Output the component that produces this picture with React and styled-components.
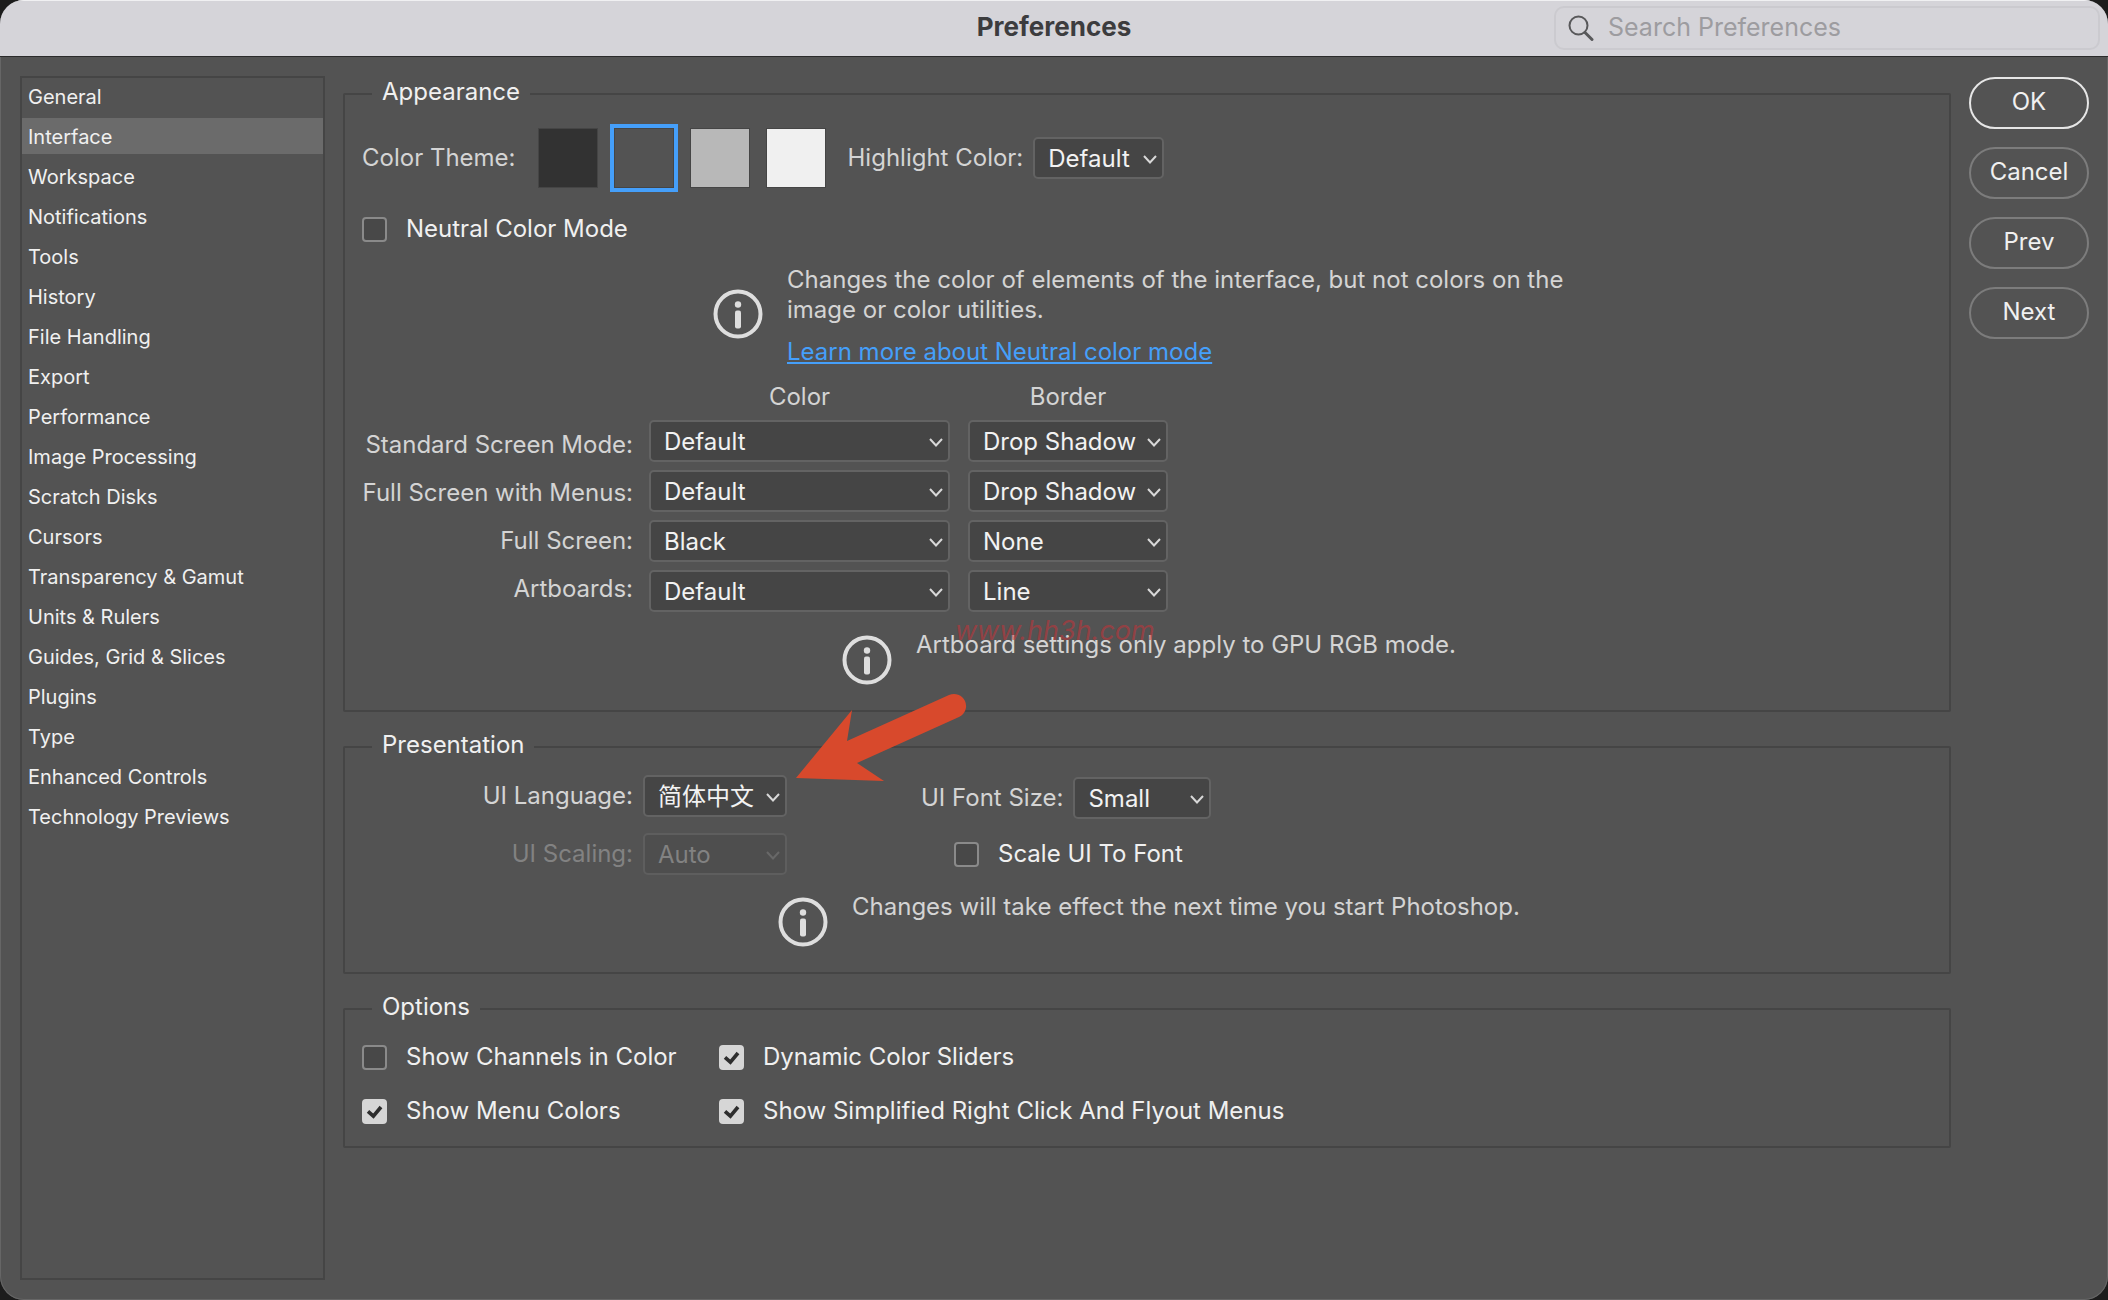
// src/components/Preferences/Preferences.jsx
import { useState } from 'react';
import styled, { createGlobalStyle } from 'styled-components';

const GlobalStyle = createGlobalStyle`
  * {
    box-sizing: border-box;
  }

  body {
    margin: 0;
    background: #1c1c1c;
    color: #d4d4d4;
    font-family: Inter, 'Noto Sans CJK SC', sans-serif;
    font-size: 24px;
    line-height: 30px;
  }

  button, input, select {
    font: inherit;
    color: inherit;
  }
`;

// Styled Components
const Dialog = styled.div`
  display: flex;
  flex-direction: column;
  min-height: 100vh;
  background: #535353;
  border-radius: 24px;
  overflow: hidden;
  box-shadow: inset 0 0 0 1px #666;
`;

const TitleBar = styled.header`
  display: grid;
  grid-template-columns: 1fr auto 1fr;
  align-items: center;
  height: 57px;
  padding: 0 8px 2px;
  background: #d5d4d9;
  border-top: 1px solid #f0f0f2;
  border-bottom: 1px solid #2b2b2b;
`;

const Title = styled.h1`
  grid-column: 2;
  margin: 0;
  padding-bottom: 2px;
  font-size: 26px;
  font-weight: 700;
  color: #3c3c3e;
`;

const SearchBox = styled.label`
  display: flex;
  align-items: center;
  justify-self: end;
  gap: 14px;
  width: 100%;
  max-width: 546px;
  height: 44px;
  padding: 0 12px;
  border: 2px solid #cbcacf;
  border-radius: 10px;
  color: #58585a;
`;

const SearchInput = styled.input`
  flex: 1;
  min-width: 0;
  padding: 0 0 2px;
  border: 0;
  outline: 0;
  background: transparent;
  font-size: 25px;

  &::placeholder {
    color: #9d9ca0;
    opacity: 1;
  }
`;

const Body = styled.div`
  display: flex;
  flex: 1;
  gap: 18px;
  padding: 19px 19px 20px 20px;
`;

const Sidebar = styled.nav`
  flex: 0 0 305px;
  border: 2px solid #454545;
`;

const SidebarList = styled.ul`
  display: flex;
  flex-direction: column;
  gap: 4px;
  margin: 0;
  padding: 0;
  list-style: none;
`;

const SidebarLink = styled.a`
  display: block;
  padding: 2px 6px 0;
  font-size: 20px;
  line-height: 34px;
  color: #f0f0f0;
  text-decoration: none;
  background: ${({ $active }) => ($active ? '#6b6b6b' : 'transparent')};
`;

const Panels = styled.main`
  position: relative;
  display: flex;
  flex: 1;
  flex-direction: column;
  gap: 21px;
  min-width: 0;
  padding-top: 4px;
`;

const Group = styled.fieldset`
  min-width: 0;
  margin: 0;
  padding: 14px 17px 20px;
  border: 2px solid #454545;
  border-radius: 2px;
`;

const GroupTitle = styled.legend`
  margin-left: 10px;
  padding: 0 10px 4px;
  line-height: 24px;
  color: #f0f0f0;
`;

const ThemeRow = styled.div`
  display: flex;
  align-items: center;
  gap: 22px;
  margin-top: 6px;
`;

const Swatches = styled.div`
  display: flex;
  gap: 16px;
`;

const Swatch = styled.input`
  appearance: none;
  width: 60px;
  height: 60px;
  margin: 0;
  border: 1px solid #454545;
  background: ${({ $color }) => $color};

  &:checked {
    outline: 4px solid #459ffa;
  }
`;

const Field = styled.div`
  display: flex;
  align-items: center;
  justify-content: space-between;
  gap: 10px;
`;

const FieldLabel = styled.label`
  flex: 1;
  text-align: right;
  white-space: nowrap;
  color: ${({ $disabled }) => ($disabled ? '#828282' : '#d4d4d4')};
`;

const SelectBox = styled.div`
  display: grid;
  align-items: center;
  width: ${({ $width }) => $width}px;
  color: ${({ $disabled }) => ($disabled ? '#828282' : '#f2f2f2')};

  > * {
    grid-area: 1 / 1;
  }

  svg {
    justify-self: end;
    margin: 3px 7px 0 0;
    pointer-events: none;
    opacity: ${({ $disabled }) => ($disabled ? 0.5 : 0.85)};
  }
`;

const NativeSelect = styled.select`
  appearance: none;
  width: 100%;
  height: 42px;
  padding: 2px 24px 0 13px;
  border: 2px solid #636363;
  border-radius: 5px;
  background: #454545;
  opacity: 1;

  &:disabled {
    border-color: #5e5e5e;
    background: #4e4e4e;
  }
`;

const CheckLabel = styled.label`
  display: flex;
  align-items: center;
  gap: 19px;
  color: #f0f0f0;
`;

const CheckBox = styled.span`
  display: grid;
  width: 25px;
  height: 25px;

  > * {
    grid-area: 1 / 1;
  }

  svg {
    pointer-events: none;
  }
`;

const NativeCheckbox = styled.input`
  appearance: none;
  width: 25px;
  height: 25px;
  margin: 0;
  border: 2px solid #8a8a8a;
  border-radius: 4px;
  background: #484848;

  &:checked {
    border-color: #d6d6d6;
    background: #d6d6d6;
  }

  &:not(:checked) + svg {
    display: none;
  }
`;

const NeutralRow = styled.div`
  display: flex;
  margin-top: 26px;
`;

const Info = styled.div`
  display: flex;
  align-items: ${({ $centered }) => ($centered ? 'center' : 'flex-start')};
  gap: 24px;
  margin: ${({ $top }) => $top}px 0 0 ${({ $indent }) => $indent}px;
  padding-bottom: ${({ $centered }) => ($centered ? 0 : 5)}px;

  svg {
    flex: none;
    margin: ${({ $centered }) => ($centered ? '0 0 4px' : '5px 0 0')};
  }
`;

const InfoText = styled.p`
  max-width: 800px;
  margin: 0;
`;

const InfoLink = styled.a`
  display: inline-block;
  margin-top: 12px;
  color: #459ffa;
  text-underline-offset: 2px;
`;

const ScreenModes = styled.div`
  display: flex;
  align-items: flex-start;
  gap: 16px;
  margin-top: 15px;
`;

const ScreenLabels = styled.div`
  display: flex;
  flex-direction: column;
  width: 271px;
  padding-top: 39px;
  line-height: 48px;
`;

const ScreenGrid = styled.div`
  display: grid;
  grid-template-columns: auto auto;
  gap: 8px 18px;
`;

const ColumnTitle = styled.span`
  text-align: center;
`;

const PresentationRow = styled.div`
  display: flex;
  gap: 134px;
`;

const LanguageFields = styled.div`
  display: flex;
  flex-direction: column;
  gap: 16px;
  width: 425px;
`;

const FontFields = styled.div`
  display: flex;
  flex-direction: column;
  gap: 20px;
  padding-top: 2px;
`;

const ScaleRow = styled.div`
  padding-left: 33px;
`;

const OptionGrid = styled.div`
  display: grid;
  grid-template-columns: 357px 1fr;
  gap: 24px 0;
  margin-top: 5px;
`;

const Actions = styled.div`
  display: flex;
  flex: 0 0 120px;
  flex-direction: column;
  gap: 18px;
  padding-top: 1px;
`;

const ActionButton = styled.button`
  height: 52px;
  padding: 0 0 2px;
  border: 2px solid ${({ $primary }) => ($primary ? '#e6e6e6' : '#7c7c7c')};
  border-radius: 26px;
  background: transparent;
  color: #f0f0f0;
`;

const Watermark = styled.span`
  position: absolute;
  top: 540px;
  left: 612px;
  font-size: 27px;
  font-style: italic;
  color: rgba(200, 50, 55, 0.55);
  pointer-events: none;
`;

const Pointer = styled.svg`
  position: absolute;
  top: 614px;
  left: 453px;
  pointer-events: none;
`;

const sections = [
  'General',
  'Interface',
  'Workspace',
  'Notifications',
  'Tools',
  'History',
  'File Handling',
  'Export',
  'Performance',
  'Image Processing',
  'Scratch Disks',
  'Cursors',
  'Transparency & Gamut',
  'Units & Rulers',
  'Guides, Grid & Slices',
  'Plugins',
  'Type',
  'Enhanced Controls',
  'Technology Previews',
];

const themes = [
  { name: 'Dark', color: '#323232' },
  { name: 'Medium gray', color: '#535353' },
  { name: 'Light gray', color: '#b8b8b8' },
  { name: 'Light', color: '#f0f0f0' },
];

const screenModes = [
  { id: 'standard', label: 'Standard Screen Mode:', color: 'Default', border: 'Drop Shadow' },
  { id: 'menus', label: 'Full Screen with Menus:', color: 'Default', border: 'Drop Shadow' },
  { id: 'full', label: 'Full Screen:', color: 'Black', border: 'None' },
  { id: 'artboards', label: 'Artboards:', color: 'Default', border: 'Line' },
];

const options = [
  { label: 'Show Channels in Color', checked: false },
  { label: 'Dynamic Color Sliders', checked: true },
  { label: 'Show Menu Colors', checked: true },
  { label: 'Show Simplified Right Click And Flyout Menus', checked: true },
];

const SearchIcon = () => (
  <svg width="26" height="26" viewBox="0 0 26 26" fill="none" stroke="currentColor" aria-hidden="true">
    <circle cx="10.5" cy="10.5" r="9" strokeWidth="2" />
    <path d="M17 17.5l7 7" strokeWidth="3" strokeLinecap="round" />
  </svg>
);

const InfoIcon = () => (
  <svg width="50" height="50" viewBox="0 0 50 50" aria-hidden="true">
    <circle cx="25" cy="25" r="22.5" fill="none" stroke="#dedede" strokeWidth="4" />
    <circle cx="25" cy="15.5" r="3.2" fill="#dedede" />
    <rect x="22" y="21.5" width="6" height="18" rx="2" fill="#dedede" />
  </svg>
);

const Dropdown = ({ id, value, width, disabled, label }) => (
  <SelectBox $width={width} $disabled={disabled}>
    <NativeSelect id={id} defaultValue={value} disabled={disabled} aria-label={label}>
      <option>{value}</option>
    </NativeSelect>
    <svg width="14" height="9" viewBox="0 0 14 9" fill="none" stroke="currentColor" strokeWidth="2" aria-hidden="true">
      <path d="M1 1l6 6.5L13 1" />
    </svg>
  </SelectBox>
);

const Checkbox = ({ label, checked = false }) => (
  <CheckLabel>
    <CheckBox>
      <NativeCheckbox type="checkbox" defaultChecked={checked} />
      <svg width="25" height="25" viewBox="0 0 25 25" fill="none" stroke="#2e2e2e" strokeWidth="3.6" aria-hidden="true">
        <path d="M6 12.3l5.4 4.9L19 8" />
      </svg>
    </CheckBox>
    {label}
  </CheckLabel>
);

const App = () => {
  const [active, setActive] = useState('Interface');

  return (
    <Dialog>
      <GlobalStyle />
      <TitleBar>
        <Title>Preferences</Title>
        <SearchBox>
          <SearchIcon />
          <SearchInput type="text" placeholder="Search Preferences" aria-label="Search Preferences" />
        </SearchBox>
      </TitleBar>

      <Body>
        <Sidebar>
          <SidebarList>
            {sections.map((name) => (
              <li key={name}>
                <SidebarLink href="#" $active={name === active} onClick={() => setActive(name)}>
                  {name}
                </SidebarLink>
              </li>
            ))}
          </SidebarList>
        </Sidebar>

        <Panels>
          <Group>
            <GroupTitle>Appearance</GroupTitle>
            <ThemeRow>
              <span>Color Theme:</span>
              <Swatches>
                {themes.map(({ name, color }) => (
                  <Swatch
                    key={name}
                    type="radio"
                    name="theme"
                    aria-label={name}
                    defaultChecked={color === '#535353'}
                    $color={color}
                  />
                ))}
              </Swatches>
              <Field>
                <FieldLabel htmlFor="highlight">Highlight Color:</FieldLabel>
                <Dropdown id="highlight" value="Default" width={131} />
              </Field>
            </ThemeRow>
            <NeutralRow>
              <Checkbox label="Neutral Color Mode" />
            </NeutralRow>
            <Info $centered $top={21} $indent={351}>
              <InfoIcon />
              <div>
                <InfoText>
                  Changes the color of elements of the interface, but not colors on the image or color utilities.
                </InfoText>
                <InfoLink href="#">Learn more about Neutral color mode</InfoLink>
              </div>
            </Info>

            {/* Canvas colors per screen mode */}
            <ScreenModes>
              <ScreenLabels>
                {screenModes.map(({ id, label }) => (
                  <FieldLabel key={id} htmlFor={`${id}-color`}>{label}</FieldLabel>
                ))}
              </ScreenLabels>
              <ScreenGrid>
                <ColumnTitle>Color</ColumnTitle>
                <ColumnTitle>Border</ColumnTitle>
                {screenModes.map(({ id, label, color, border }) => [
                  <Dropdown key={`${id}-color`} id={`${id}-color`} value={color} width={301} />,
                  <Dropdown key={`${id}-border`} label={`${label} border`} value={border} width={200} />,
                ])}
              </ScreenGrid>
            </ScreenModes>
            <Info $top={17} $indent={480}>
              <InfoIcon />
              <InfoText>Artboard settings only apply to GPU RGB mode.</InfoText>
            </Info>
          </Group>

          <Group>
            <GroupTitle>Presentation</GroupTitle>
            <PresentationRow>
              <LanguageFields>
                <Field>
                  <FieldLabel htmlFor="language">UI Language:</FieldLabel>
                  <Dropdown id="language" value="简体中文" width={144} />
                </Field>
                <Field>
                  <FieldLabel htmlFor="scaling" $disabled>UI Scaling:</FieldLabel>
                  <Dropdown id="scaling" value="Auto" width={144} disabled />
                </Field>
              </LanguageFields>
              <FontFields>
                <Field>
                  <FieldLabel htmlFor="font-size">UI Font Size:</FieldLabel>
                  <Dropdown id="font-size" value="Small" width={138} />
                </Field>
                <ScaleRow>
                  <Checkbox label="Scale UI To Font" />
                </ScaleRow>
              </FontFields>
            </PresentationRow>
            <Info $top={17} $indent={416}>
              <InfoIcon />
              <InfoText>Changes will take effect the next time you start Photoshop.</InfoText>
            </Info>
          </Group>

          <Group>
            <GroupTitle>Options</GroupTitle>
            <OptionGrid>
              {options.map(({ label, checked }) => (
                <Checkbox key={label} label={label} checked={checked} />
              ))}
            </OptionGrid>
          </Group>

          <Watermark>www.hh3h.com</Watermark>
          <Pointer width="176" height="96" viewBox="0 0 176 96" aria-hidden="true">
            <path
              d="M0 88L56 20L51 51L153 5A12 12 0 0 1 163 27L61 73L88 91Z"
              fill="#d8492c"
            />
          </Pointer>
        </Panels>

        <Actions>
          <ActionButton type="button" $primary>OK</ActionButton>
          <ActionButton type="button">Cancel</ActionButton>
          <ActionButton type="button">Prev</ActionButton>
          <ActionButton type="button">Next</ActionButton>
        </Actions>
      </Body>
    </Dialog>
  );
};

export default App;
